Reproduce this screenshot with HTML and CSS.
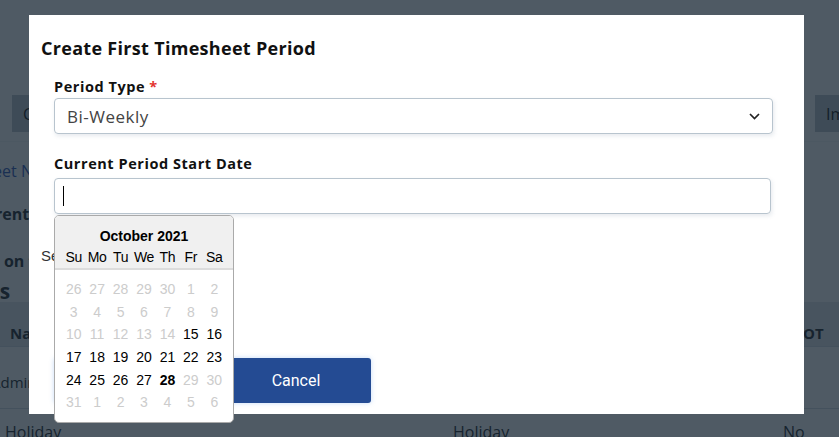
FILE: index.html
```html
<!DOCTYPE html>
<html lang="en">
<head>
<meta charset="utf-8">
<title>Create First Timesheet Period</title>
<link rel="stylesheet" href="styles.css">
</head>
<body>
<div class="page">
  <div class="toolbar">
    <button class="tb-btn">Create Period</button>
    <button class="tb-btn tb-right">Import</button>
  </div>
  <div class="link-row"><span class="shift">Timesheet Name</span></div>
  <div class="bold-row r1"><span class="shift2">Current Period</span></div>
  <div class="bold-row r2"><span class="shift3">Holidays on the calendar</span></div>
  <div class="heading"><span class="shift4">Holidays</span></div>
  <div class="tbl">
    <div class="trow thead">
      <div class="c1">Name</div>
      <div class="c2">Type</div>
      <div class="c3">OT</div>
    </div>
    <div class="trow tbody1">
      <div class="c1"><span class="shift6">Administrator</span></div>
      <div class="c2"></div>
      <div class="c3"></div>
    </div>
    <div class="trow tbody2">
      <div class="c1 c1b">Holiday</div>
      <div class="c2">Holiday</div>
      <div class="c3b">No</div>
    </div>
  </div>
</div>

<div class="overlay"></div>

<div class="modal">
  <h1 class="title">Create First Timesheet Period</h1>
  <div class="group">
    <label class="label">Period Type <span class="req">*</span></label>
    <div class="select">
      <span>Bi-Weekly</span>
      <svg class="chev" width="11" height="7" viewBox="0 0 11 7"><path d="M1 1 L5.5 5.5 L10 1" fill="none" stroke="#222" stroke-width="1.7"/></svg>
    </div>
  </div>
  <div class="group g2">
    <label class="label">Current Period Start Date</label>
    <div class="input"><span class="caret"></span></div>
  </div>
  <p class="hint">Select a date</p>
  <div class="actions">
    <button class="btn">Create</button>
    <button class="btn">Cancel</button>
  </div>

  <div class="cal">
    <div class="cal-head">
      <div class="cal-month">October 2021</div>
      <div class="cal-grid dow">
        <span>Su</span><span>Mo</span><span>Tu</span><span>We</span><span>Th</span><span>Fr</span><span>Sa</span>
      </div>
    </div>
    <div class="cal-grid days">
      <span class="o">26</span><span class="o">27</span><span class="o">28</span><span class="o">29</span><span class="o">30</span><span class="o">1</span><span class="o">2</span>
      <span class="o">3</span><span class="o">4</span><span class="o">5</span><span class="o">6</span><span class="o">7</span><span class="o">8</span><span class="o">9</span>
      <span class="o">10</span><span class="o">11</span><span class="o">12</span><span class="o">13</span><span class="o">14</span><span>15</span><span>16</span>
      <span>17</span><span>18</span><span>19</span><span>20</span><span>21</span><span>22</span><span>23</span>
      <span>24</span><span>25</span><span>26</span><span>27</span><span class="today">28</span><span class="o">29</span><span class="o">30</span>
      <span class="o">31</span><span class="o">1</span><span class="o">2</span><span class="o">3</span><span class="o">4</span><span class="o">5</span><span class="o">6</span>
    </div>
  </div>
</div>
</body>
</html>
```
FILE: styles.css
```css
html, body {
  margin: 0;
  padding: 0;
  width: 839px;
  height: 437px;
  overflow: hidden;
}
body {
  background: #ffffff;
  font-family: "Open Sans", "Liberation Sans", sans-serif;
  color: #212529;
  position: relative;
}

/* ---------- background page ---------- */
.page {
  padding-top: 95px;
  overflow: hidden;
}
.toolbar {
  display: flex;
  justify-content: space-between;
  padding: 0 0 9px 12px;
  border-bottom: 1px solid #f4f6f8;
}
.tb-btn {
  height: 37px;
  border: 0;
  background: #bcc4c9;
  color: #111;
  font-family: "Open Sans", sans-serif;
  font-size: 16px;
  padding: 0 11px;
}
.tb-right {
  margin-right: -60px;
  width: 84px;
  text-align: left;
}
.link-row {
  margin-top: 18px;
  height: 22px;
  font-size: 16px;
  color: #2f56b8;
  white-space: nowrap;
}
.shift { margin-left: -61px; }
.bold-row {
  font-weight: 700;
  font-size: 16px;
  white-space: nowrap;
  height: 22px;
}
.r1 { margin-top: 21px; }
.r2 { margin-top: 25px; }
.shift2 { margin-left: -33px; }
.shift3 { margin-left: -69px; }
.heading {
  margin-top: 5px;
  font-size: 21px;
  font-weight: 700;
  height: 28px;
  white-space: nowrap;
}
.shift4 { margin-left: -80px; }
.tbl { margin-top: -3px; }
.trow {
  display: flex;
  white-space: nowrap;
}
.thead {
  background: #e2e6ea;
  align-items: flex-end;
  font-weight: 700;
  font-size: 15px;
  line-height: 20px;
  border-bottom: 1px solid #d4dbe2;
  box-sizing: border-box;
  height: 45px;
  padding-bottom: 3px;
}
.tbody1 {
  height: 62px;
  align-items: flex-start;
  padding-top: 25px;
  font-size: 15px;
  line-height: 20px;
  border-bottom: 1px solid #d4dbe2;
  box-sizing: border-box;
}
.tbody2 {
  padding-top: 12px;
  font-size: 16px;
  line-height: 22px;
}
.c1 { width: 453px; padding-left: 10px; box-sizing: border-box; }
.c1b { padding-left: 5px; }
.tbody1 .c1 { padding-left: 0; }
.c2 { width: 330px; }
.c3 { padding-left: 20px; }
.shift6 { margin-left: -9px; }

/* ---------- overlay ---------- */
.overlay {
  position: fixed;
  inset: 0;
  background: rgba(20, 35, 48, 0.75);
}

/* ---------- modal ---------- */
.modal {
  position: absolute;
  left: 29px;
  top: 15px;
  width: 775px;
  height: 399px;
  background: #ffffff;
  box-sizing: border-box;
  padding: 20px 31px 0 12px;
}
.title {
  margin: 0;
  font-family: "Open Sans", sans-serif;
  font-weight: 700;
  font-size: 18px;
  line-height: 26px;
  color: #111;
  letter-spacing: 0.3px;
}
.group {
  margin-left: 13px;
  margin-top: 16px;
}
.g2 { margin-top: 20px; }
.label {
  display: block;
  font-family: "Open Sans", sans-serif;
  font-weight: 700;
  font-size: 14.5px;
  line-height: 20px;
  color: #111;
  margin-bottom: 1px;
  letter-spacing: 0.55px;
}
.g2 .label { margin-bottom: 4px; }
.req { color: #e3342f; }
.select {
  height: 36px;
  border: 1px solid #b8c4ce;
  border-radius: 4px;
  box-sizing: border-box;
  display: flex;
  align-items: center;
  justify-content: space-between;
  padding: 0 12px 0 12px;
  font-size: 17px;
  letter-spacing: 0.5px;
  color: #444;
  box-shadow: 1px 2px 4px rgba(120, 140, 160, 0.18);
}
.chev { display: block; margin-top: 1px; }
.input {
  height: 36px;
  width: 717px;
  border: 1px solid #b8c4ce;
  border-radius: 4px;
  box-sizing: border-box;
  display: flex;
  align-items: center;
  padding-left: 8px;
  box-shadow: 1px 2px 4px rgba(120, 140, 160, 0.18);
}
.caret {
  display: block;
  width: 1px;
  height: 20px;
  background: #000;
}
.hint {
  margin: 32px 0 0 0;
  font-family: "Liberation Sans", Arial, sans-serif;
  font-size: 15px;
  line-height: 20px;
  color: #333;
}
.actions {
  display: flex;
  gap: 17px;
  margin-top: 92px;
  margin-left: 13px;
}
.btn {
  width: 150px;
  height: 45px;
  border: 0;
  border-radius: 3px;
  background: #244b93;
  color: #fff;
  font-family: Roboto, sans-serif;
  font-size: 16px;
  box-shadow: 0 0 5px rgba(90, 150, 230, 0.35);
}

/* ---------- datepicker ---------- */
.cal {
  position: absolute;
  left: 25px;
  top: 200px;
  width: 180px;
  height: 208px;
  box-sizing: border-box;
  border: 1px solid #aaa;
  border-radius: 5px;
  background: #fff;
  font-family: "Liberation Sans", Arial, sans-serif;
  overflow: hidden;
}
.cal-head {
  background: #f0f0f0;
  border-bottom: 2px solid #dcdcdc;
  padding-top: 12px;
  height: 54px;
  box-sizing: border-box;
}
.cal-month {
  text-align: center;
  font-weight: 700;
  font-size: 14px;
  line-height: 16px;
  color: #000;
}
.cal-grid {
  display: grid;
  grid-template-columns: repeat(7, 1fr);
  padding: 0 7px;
  text-align: center;
}
.dow {
  margin-top: 5px;
  font-size: 14px;
  line-height: 16px;
  color: #000;
}
.dow span { letter-spacing: -0.3px; }
.days {
  padding-top: 8px;
  grid-auto-rows: 22.6px;
  font-size: 14px;
  color: #000;
  align-items: center;
}
.days .o { color: #cccccc; }
.days .today { font-weight: 700; }
```
